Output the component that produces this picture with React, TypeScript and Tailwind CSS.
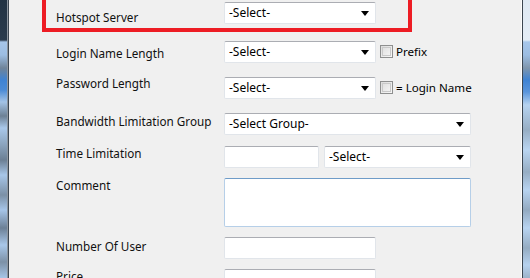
import React from "react";

const font = { fontFamily: '"Noto Sans", "Open Sans", sans-serif' };

const Arrow = () => (
  <svg width="8" height="5" viewBox="0 0 8 5" className="shrink-0">
    <path d="M0 0 H8 L4 5 Z" fill="#000" />
  </svg>
);

const Select: React.FC<{ text: string; w: string }> = ({ text, w }) => (
  <div
    className={`${w} h-[22px] bg-white border border-[#e1e5ea] border-t-[#abadb3] rounded-[2px] flex items-center justify-between pl-[4px] pr-[6px] text-[12px] text-black`}
  >
    <span>{text}</span>
    <Arrow />
  </div>
);

const Input: React.FC<{ w: string }> = ({ w }) => (
  <div className={`${w} h-[22px] bg-white border border-[#e1e5ea] border-t-[#abadb3] rounded-[2px]`} />
);

const Check: React.FC<{ label: string }> = ({ label }) => (
  <div className="flex items-center ml-[4px]">
    <div className="w-[13px] h-[13px] border border-[#8e8f8f] bg-[linear-gradient(135deg,#dcdcdc,#f8f8f8)] p-[1px]">
      <div className="w-full h-full border border-[#c9c9c9]" />
    </div>
    <span className="ml-[3px] text-[11.6px] text-black">{label}</span>
  </div>
);

const Label: React.FC<{ text: string; off: string }> = ({ text, off }) => (
  <div className={`w-[168px] shrink-0 text-[11.7px] leading-[16px] text-[#111] ${off}`}>{text}</div>
);

export default function App() {
  return (
    <div className="w-[530px] h-[278px] flex overflow-hidden bg-[#f0f0f0]" style={font}>
      {/* left window frame */}
      <div className="w-[7px] h-full bg-[linear-gradient(to_bottom,#223344_0px,#2a3b4d_40px,#a6c6ea_42px,#9cbde2_55px,#6f8499_68px,#3f83d3_80px,#4b8bd6_90px,#a3c3e6_102px,#6d8195_116px,#a9c8ea_128px,#8aa3bd_145px,#6b7f94_160px,#a7c6e8_175px,#7b90a6_195px,#a6c5e8_210px,#6c8096_228px,#a8c7e9_245px,#7c91a7_262px,#a6c5e7_278px)]" />
      <div className="w-[1px] h-full bg-[#8d96a0]" />
      <div className="w-[1px] h-full bg-[#3c4650]" />

      <div className="flex-1 h-full bg-[#f0f0f0]">
        {/* highlighted row */}
        <div className="ml-[33px] w-[370px] border-x-4 border-b-4 border-[#ed1c24] pt-[2px] pb-[3px] pl-[10px] flex items-start">
          <Label text="Hotspot Server" off="mt-[7px]" />
          <Select text="-Select-" w="w-[152px]" />
        </div>

        <div className="ml-[47px] flex flex-col">
          <div className="flex items-start mt-[9px]">
            <Label text="Login Name Length" off="mt-[4px]" />
            <Select text="-Select-" w="w-[152px]" />
            <div className="h-[22px] flex items-center">
              <Check label="Prefix" />
            </div>
          </div>

          <div className="flex items-start mt-[14px]">
            <Label text="Password Length" off="mt-[-2px]" />
            <Select text="-Select-" w="w-[152px]" />
            <div className="h-[22px] flex items-center">
              <Check label="= Login Name" />
            </div>
          </div>

          <div className="flex items-start mt-[14px]">
            <Label text="Bandwidth Limitation Group" off="mt-0" />
            <Select text="-Select Group-" w="w-[247px]" />
          </div>

          <div className="flex items-start mt-[11px]">
            <Label text="Time Limitation" off="mt-[-1px]" />
            <Input w="w-[95px]" />
            <div className="ml-[5px]">
              <Select text="-Select-" w="w-[147px]" />
            </div>
          </div>

          <div className="flex items-start mt-[10px]">
            <Label text="Comment" off="mt-[-1px]" />
            <div className="w-[247px] h-[49px] bg-white border border-[#b6cfe8] border-t-[#6f9cc8] rounded-[2px]" />
          </div>

          <div className="flex items-start mt-[10px]">
            <Label text="Number Of User" off="mt-[1px]" />
            <Input w="w-[152px]" />
          </div>

          <div className="flex items-start mt-[10px]">
            <Label text="Price" off="mt-[-1px]" />
            <Input w="w-[152px]" />
          </div>
        </div>
      </div>

      {/* right window frame */}
      <div className="w-[1px] h-full bg-[#fdfdfd]" />
      <div className="w-[1px] h-full bg-[#3c4650]" />
      <div className="w-[7px] h-full bg-[linear-gradient(to_bottom,#dfe9f3_0px,#e4edf6_40px,#a6c6ea_42px,#9cbde2_55px,#7f96ad_68px,#3f83d3_80px,#5a95db_92px,#b6d3f0_105px,#97aec4_130px,#b9d5f1_150px,#96adc3_172px,#b7d3f0_190px,#93aac1_210px,#b8d4f1_228px,#95acc2_248px,#b6d2ef_265px,#9cb3c9_278px)]" />
    </div>
  );
}
